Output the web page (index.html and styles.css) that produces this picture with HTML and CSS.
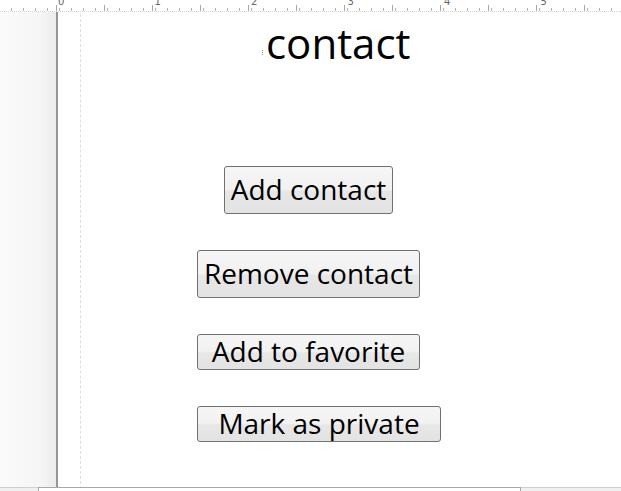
FILE: index.html
```html
<!DOCTYPE html>
<html>
<head>
<meta charset="utf-8">
<link rel="stylesheet" href="styles.css">
</head>
<body>
<div class="ruler">
  <div class="ruler-nums">
    <span class="num">0</span><span class="num">1</span><span class="num">2</span><span class="num">3</span><span class="num">4</span><span class="num">5</span>
  </div>
</div>
<div class="workspace">
  <div class="gutter"></div>
  <div class="page">
    <div class="doc">
      <div class="title-row"><span class="mark"></span><span class="title">contact</span></div>
      <div class="buttons">
        <button class="btn btn-add">Add contact</button>
        <button class="btn btn-remove">Remove contact</button>
        <button class="btn btn-small btn-fav">Add to favorite</button>
        <button class="btn btn-small btn-private">Mark as private</button>
      </div>
    </div>
  </div>
</div>
<div class="statusbar"><div class="scrollbox"></div></div>
</body>
</html>
```

FILE: styles.css
```css
html, body {
  margin: 0;
  padding: 0;
}
body {
  width: 621px;
  height: 491px;
  overflow: hidden;
  background: #ffffff;
  font-family: "Open Sans", "Noto Sans", sans-serif;
  display: flex;
  flex-direction: column;
}
.ruler {
  height: 12px;
  flex: none;
  border-bottom: 1px dotted #d4d4d4;
  box-sizing: border-box;
  background:
    repeating-linear-gradient(90deg, transparent 0, transparent 11px, #b4b4b4 11px, #b4b4b4 12px) 0 8px / 100% 3px no-repeat,
    repeating-linear-gradient(90deg, transparent 0, transparent 47px, #a8a8a8 47px, #a8a8a8 48px) 9px 5px / 100% 6px no-repeat,
    #ffffff;
  overflow: hidden;
}
.ruler-nums {
  display: flex;
  padding-left: 58px;
  margin-top: -4px;
}
.num {
  width: 96.5px;
  flex: none;
  font-size: 10px;
  line-height: 12px;
  color: #666666;
  font-family: "DejaVu Sans", sans-serif;
}
.workspace {
  flex: none;
  height: 475px;
  display: flex;
}
.gutter {
  width: 56px;
  flex: none;
  background: linear-gradient(90deg, #fbfbfb 0, #f6f6f6 70%, #ebebeb 100%);
  border-right: 2px solid #959595;
}
.page {
  flex: 1;
  background: #ffffff;
  padding-left: 22px;
}
.doc {
  height: 100%;
  border-left: 1px dashed #dedede;
}
.title-row {
  display: flex;
  align-items: flex-end;
  padding-left: 181px;
  margin-top: 2px;
}
.mark {
  width: 1px;
  height: 5px;
  border-left: 1px dotted #888;
  margin-bottom: 17px;
  margin-right: 2px;
}
.title {
  font-size: 42px;
  line-height: 58px;
  color: #000;
}
.buttons {
  display: flex;
  flex-direction: column;
  align-items: flex-start;
  gap: 36px;
  padding-left: 116px;
  margin-top: 94px;
}
.btn {
  font-family: "Open Sans", "Noto Sans", sans-serif;
  font-size: 28px;
  color: #000;
  height: 48px;
  padding: 0 0 2px;
  border: 1px solid #707070;
  border-radius: 3px;
  background: linear-gradient(180deg, #f6f6f6 0, #f1f1f1 50%, #e7e7e7 52%, #e3e3e3 100%);
  display: flex;
  align-items: center;
  justify-content: center;
  line-height: 38px;
  box-sizing: border-box;
}
.btn-small {
  height: 36px;
}
.btn-add {
  width: 169px;
  margin-left: 27px;
}
.btn-remove {
  width: 223px;
}
.btn-fav {
  width: 223px;
}
.btn-private {
  width: 244px;
}
.statusbar {
  flex: none;
  height: 4px;
  background: #f0f0f0;
  border-top: 1px solid #cfcfcf;
  padding-left: 38px;
}
.scrollbox {
  width: 483px;
  height: 6px;
  background: #ffffff;
  border: 1px solid #a8a8a8;
  margin-top: -1px;
  box-sizing: border-box;
}
```
